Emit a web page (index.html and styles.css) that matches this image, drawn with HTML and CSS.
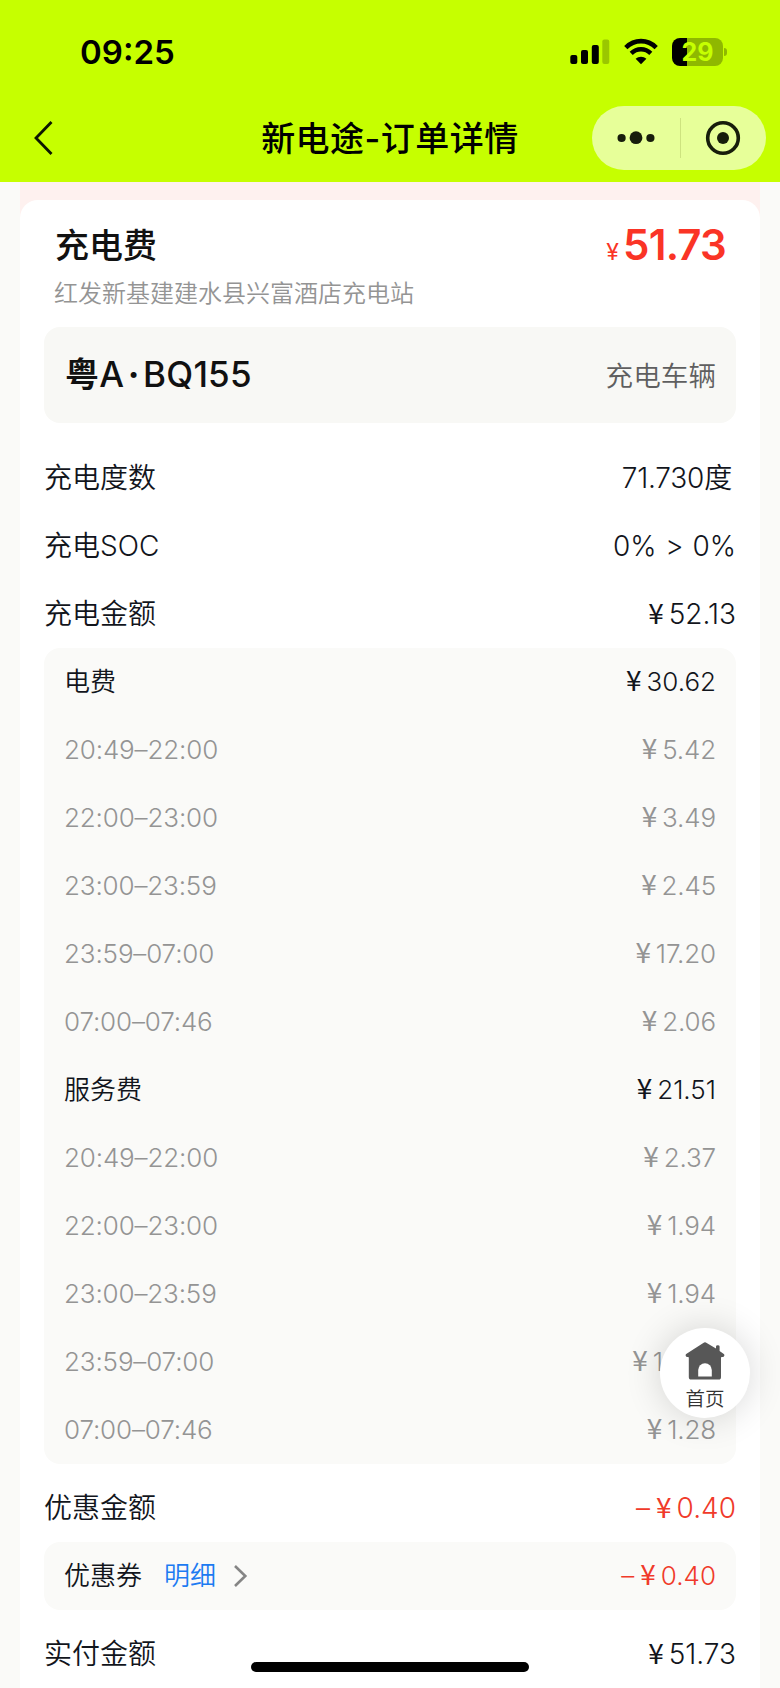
FILE: index.html
```html
<!DOCTYPE html>
<html lang="zh-CN">
<head>
    <meta charset="UTF-8">
    <meta name="viewport" content="width=device-width, initial-scale=1.0">
    <title>新电途-订单详情</title>
    <link rel="stylesheet" href="styles.css">
</head>
<body>
    <!-- Status bar and title bar -->
    <header class="header">
        <div class="status-bar">
            <span class="time">09:25</span>
            <div class="status-icons">
                <svg class="signal" width="40" height="28" viewBox="0 0 40 28">
                    <rect x="0.3" y="17" width="7" height="9" rx="2"/>
                    <rect x="11" y="12" width="7" height="14" rx="2"/>
                    <rect x="21.8" y="7" width="7" height="19" rx="2"/>
                    <rect x="32.3" y="1.5" width="7" height="24.5" rx="2" opacity="0.22"/>
                </svg>
                <svg class="wifi" width="34" height="28" viewBox="0 0 34 28">
                    <path d="M1.8 9.6 C10.5 1 23.5 1 32.2 9.6" fill="none" stroke="#000" stroke-width="4.6"/>
                    <path d="M7.2 15.3 C12.8 9.9 21.2 9.9 26.8 15.3" fill="none" stroke="#000" stroke-width="4.4"/>
                    <path d="M17 26.2 L11.6 20.8 C14.6 18 19.4 18 22.4 20.8 Z"/>
                </svg>
                <div class="battery">
                    <span class="battery-level">29</span>
                </div>
            </div>
        </div>
        <div class="title-bar">
            <svg class="back" width="20" height="36" viewBox="0 0 20 36">
                <path d="M17.5 2 L2 18 L17.5 34" fill="none" stroke="#0c1600" stroke-width="2.8"/>
            </svg>
            <h1>新电途-订单详情</h1>
            <div class="capsule">
                <svg width="40" height="16" viewBox="0 0 40 16">
                    <circle cx="5.6" cy="8" r="4.1"/>
                    <circle cx="20" cy="7.7" r="6.4"/>
                    <circle cx="34.4" cy="8" r="4.1"/>
                </svg>
                <span class="capsule-line"></span>
                <svg width="36" height="36" viewBox="0 0 36 36">
                    <circle cx="18" cy="18" r="15.3" fill="none" stroke="#171d0b" stroke-width="3.6"/>
                    <circle cx="18" cy="18" r="6"/>
                </svg>
            </div>
        </div>
    </header>

    <!-- Order detail -->
    <main class="order">
        <div class="card">
            <div class="summary">
                <h2>充电费</h2>
                <div class="total"><span class="total-yen">¥</span>51.73</div>
            </div>
            <p class="station">红发新基建建水县兴富酒店充电站</p>

            <div class="plate">
                <span class="plate-number"><span class="plate-area">粤</span>A<span class="plate-dot">·</span>BQ155</span>
                <span class="plate-label">充电车辆</span>
            </div>

            <div class="row"><span>充电度数</span><span class="value degree">71.730<span class="unit">度</span></span></div>
            <div class="row"><span>充电<span class="latin">SOC</span></span><span class="value soc">0% &gt; 0%</span></div>
            <div class="row"><span>充电金额</span><span class="value"><i class="yen">¥</i>52.13</span></div>

            <div class="panel">
                <div class="row"><span>电费</span><span class="value"><i class="yen">¥</i>30.62</span></div>
                <div class="row sub"><span>20:49–22:00</span><span class="value"><i class="yen">¥</i>5.42</span></div>
                <div class="row sub"><span>22:00–23:00</span><span class="value"><i class="yen">¥</i>3.49</span></div>
                <div class="row sub"><span>23:00–23:59</span><span class="value"><i class="yen">¥</i>2.45</span></div>
                <div class="row sub"><span>23:59–07:00</span><span class="value"><i class="yen">¥</i>17.20</span></div>
                <div class="row sub"><span>07:00–07:46</span><span class="value"><i class="yen">¥</i>2.06</span></div>
                <div class="row"><span>服务费</span><span class="value"><i class="yen">¥</i>21.51</span></div>
                <div class="row sub"><span>20:49–22:00</span><span class="value"><i class="yen">¥</i>2.37</span></div>
                <div class="row sub"><span>22:00–23:00</span><span class="value"><i class="yen">¥</i>1.94</span></div>
                <div class="row sub"><span>23:00–23:59</span><span class="value"><i class="yen">¥</i>1.94</span></div>
                <div class="row sub"><span>23:59–07:00</span><span class="value"><i class="yen">¥</i>13.98</span></div>
                <div class="row sub"><span>07:00–07:46</span><span class="value"><i class="yen">¥</i>1.28</span></div>
            </div>

            <div class="row discount"><span>优惠金额</span><span class="value red">–<i class="yen">¥</i>0.40</span></div>
            <div class="panel coupon">
                <div class="row">
                    <span class="coupon-name">优惠券
                        <a class="detail-link">明细</a>
                        <svg width="15" height="24" viewBox="0 0 15 24">
                            <path d="M2 2 L12.3 12 L2 22" fill="none" stroke="#858585" stroke-width="2.6"/>
                        </svg>
                    </span>
                    <span class="value red">–<i class="yen">¥</i>0.40</span>
                </div>
            </div>
            <div class="row paid"><span>实付金额</span><span class="value"><i class="yen">¥</i>51.73</span></div>
        </div>
    </main>

    <!-- Floating home button -->
    <a class="home-button">
        <svg width="40" height="38" viewBox="0 0 40 38">
            <path d="M18.3 0.9 Q20 -0.2 21.7 0.9 L31 6.5 V4.6 Q31 3.2 32.8 3.2 Q34.6 3.2 34.6 4.6 V9 L38.8 12 Q40 13.2 38.7 14.8 L36 15.2 V35 Q36 37.6 33.6 37.6 H6.2 Q3.8 37.6 3.8 35 V15.2 L1.3 14.8 Q0 13.2 1.2 12 Z" fill="#575757"/>
            <path d="M13.2 34.6 V28 A6.8 6.8 0 0 1 26.8 28 V34.6 Z" fill="#fff"/>
        </svg>
        <span>首页</span>
    </a>
    <div class="home-indicator"></div>
</body>
</html>
```
FILE: styles.css
```css
* {
    box-sizing: border-box;
}

body {
    margin: 0;
    height: 1688px;
    overflow: hidden;
    background: #fafaf8;
    font-family: Inter, "Noto Sans CJK SC", sans-serif;
    font-weight: 400;
    color: #12151c;
}

/* Green header */
.header {
    height: 182px;
    background: #c6ff00;
    color: #000;
}

.status-bar {
    height: 94px;
    padding: 10px 57px 0 80px;
    display: flex;
    align-items: center;
    justify-content: space-between;
}

.time {
    font-size: 33px;
    font-weight: 600;
    line-height: 40px;
}

.status-icons {
    display: flex;
    align-items: center;
}

.wifi {
    margin: 0 14px;
}

.battery {
    position: relative;
    width: 51px;
    height: 28px;
    border-radius: 8px;
    background: linear-gradient(to right, #000 15px, #8fb800 15px);
    text-align: center;
}

/* Battery tip */
.battery::after {
    content: "";
    position: absolute;
    right: -4px;
    top: 10px;
    width: 3px;
    height: 8px;
    border-radius: 0 4px 4px 0;
    background: #8fb800;
}

.battery-level {
    display: block;
    color: #c6ff00;
    font-size: 25px;
    font-weight: 700;
    line-height: 28px;
}

.title-bar {
    height: 88px;
    padding: 0 14px;
    display: grid;
    grid-template-columns: 174px 1fr 174px;
    align-items: center;
}

.back {
    margin-left: 20px;
}

.title-bar h1 {
    margin: 0;
    padding-top: 2px;
    font-size: 34px;
    font-weight: 500;
    line-height: 50px;
    letter-spacing: 0.5px;
    text-align: center;
    white-space: nowrap;
}

.capsule {
    height: 64px;
    padding: 0 25px 0 24px;
    border-radius: 32px;
    background: #e7ff99;
    display: flex;
    align-items: center;
    justify-content: space-between;
    fill: #171d0b;
}

.capsule-line {
    width: 1px;
    height: 40px;
    background: #cde37f;
}

/* Card */
.order {
    margin: 0 20px;
    padding-top: 18px;
    background: linear-gradient(#fef1ef 60px, #fff 60px);
}

.card {
    height: 1488px;
    padding: 0 24px;
    border-radius: 18px 18px 0 0;
    background: #fff;
}

.summary {
    height: 76px;
    padding: 16px 10px 0 11px;
    display: flex;
    justify-content: space-between;
    align-items: center;
}

.summary h2 {
    margin: 0;
    font-size: 34px;
    font-weight: 500;
    line-height: 50px;
    color: #111;
}

.total {
    padding-top: 4px;
    font-size: 42px;
    font-weight: 600;
    line-height: 50px;
    letter-spacing: -0.8px;
    color: #fa3426;
}

.total-yen {
    margin-right: 5px;
    font-size: 23px;
    font-weight: 400;
}

.station {
    margin: 0 0 16px;
    padding-left: 10px;
    font-size: 24px;
    font-weight: 350;
    line-height: 35px;
    color: #949494;
}

.plate {
    height: 96px;
    padding: 0 20px 2px 21px;
    border-radius: 16px;
    background: #f8f8f5;
    display: flex;
    align-items: center;
    justify-content: space-between;
}

.plate-number {
    font-size: 35px;
    font-weight: 500;
    line-height: 50px;
    letter-spacing: 0.2px;
    color: #111;
}

.plate-area {
    font-size: 34px;
    font-weight: 700;
}

.plate-dot {
    margin: 0 3.5px;
    font-weight: 700;
}

.plate-label {
    font-size: 27.6px;
    font-weight: 350;
    color: #5f5f5f;
}

/* Rows */
.row {
    height: 68px;
    display: flex;
    align-items: center;
    justify-content: space-between;
    font-size: 28px;
    font-weight: 350;
    line-height: 40px;
    font-feature-settings: "calt" 0;
}

.plate + .row {
    margin-top: 21px;
}

.value,
.latin,
.sub {
    font-weight: 330;
}

.unit {
    font-weight: 350;
}

.yen {
    margin-right: 5px;
    font-family: "Noto Sans CJK SC", sans-serif;
    font-size: 28px;
    font-weight: 400;
    font-style: normal;
    line-height: 1;
}

.degree {
    padding-right: 4px;
    letter-spacing: -0.2px;
}

.soc {
    word-spacing: 1px;
}

.panel {
    padding: 0 20px;
    border-radius: 16px;
    background: #fafaf8;
}

.panel .row {
    font-size: 26px;
}

.panel .sub {
    letter-spacing: -0.15px;
    color: #949494;
}

.discount,
.paid {
    margin-top: 10px;
}

.red {
    color: #f03a2a;
}

.red .yen {
    margin-left: 6px;
}

.coupon-name {
    display: flex;
    align-items: center;
}

.detail-link {
    margin: 0 17px 0 22px;
    color: #1c7bf2;
}

/* Floating button over the list */
.home-button {
    position: absolute;
    left: 660px;
    top: 1328px;
    width: 90px;
    height: 90px;
    padding-top: 14px;
    border-radius: 50%;
    background: #fff;
    box-shadow: 0 0 36px rgba(0, 0, 0, 0.16);
    display: flex;
    flex-direction: column;
    align-items: center;
    font-size: 19.5px;
    font-weight: 350;
    line-height: 28px;
    color: #333;
}

.home-button span {
    margin-top: 5px;
}

.home-indicator {
    position: absolute;
    left: 251px;
    top: 1662px;
    width: 278px;
    height: 10px;
    border-radius: 5px;
    background: #000;
}
```
